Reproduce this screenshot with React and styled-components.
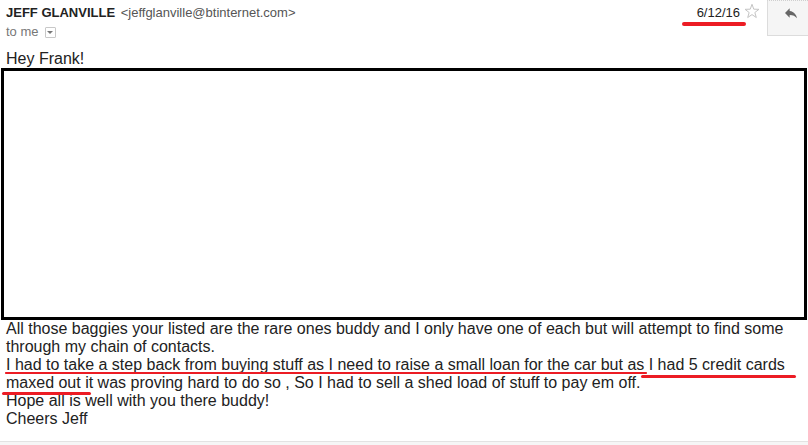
import React from "react";
import styled, { createGlobalStyle } from "styled-components";

const GlobalStyle = createGlobalStyle`
  html, body {
    margin: 0;
    padding: 0;
    background: #fff;
    overflow: hidden;
  }
  body {
    font-family: "Liberation Sans", Arial, sans-serif;
    color: #222;
  }
  * { box-sizing: border-box; }
`;

const Page = styled.div`
  width: 808px;
  height: 445px;
  display: flex;
  flex-direction: column;
  overflow: hidden;
`;

const Header = styled.header`
  display: flex;
  justify-content: space-between;
  align-items: flex-start;
  height: 50px;
  padding-left: 6px;
  font-size: 13px;
`;

const Sender = styled.div`
  display: flex;
  flex-direction: column;
`;

const NameLine = styled.div`
  padding-top: 5px;
  line-height: 15px;
  white-space: nowrap;
`;

const Name = styled.span`
  font-weight: bold;
  color: #222;
`;

const Email = styled.span`
  margin-left: 2px;
  color: #555;
`;

const Recipient = styled.div`
  display: flex;
  align-items: center;
  margin-top: 4px;
  line-height: 15px;
  color: #777;
`;

const DropToggle = styled.span`
  display: inline-flex;
  align-items: center;
  justify-content: center;
  width: 11px;
  height: 11px;
  margin-left: 6px;
  margin-top: 1px;
  border: 1px solid #c8c8c8;
  border-radius: 1px;
  background: #fff;

  &::after {
    content: "";
    border-left: 3px solid transparent;
    border-right: 3px solid transparent;
    border-top: 3px solid #777;
  }
`;

const Actions = styled.div`
  display: flex;
  align-items: flex-start;
`;

const DateStamp = styled.span`
  position: relative;
  padding-top: 5px;
  line-height: 15px;
  color: #222;
`;

const Highlight = styled.span`
  position: absolute;
  left: ${(p) => p.$left}px;
  top: ${(p) => p.$top}px;
  width: ${(p) => p.$width}px;
  height: ${(p) => p.$height}px;
  background: #ec1c24;
  border-radius: ${(p) => p.$height / 2}px;
`;

const StarWrap = styled.span`
  display: flex;
  margin: 3px 7px 0 4px;
`;

const ReplyButton = styled.div`
  display: flex;
  align-items: flex-start;
  width: 41px;
  height: 36px;
  padding: 4px 0 0 15px;
  background: #f5f5f5;
  border: 1px solid #dcdcdc;
  border-top: 1px dotted #cfcfcf;
  border-right: none;
`;

const Content = styled.main`
  padding-left: 6px;
  font-size: 16px;
  line-height: 18px;
  color: #222;
`;

const Greeting = styled.div``;

const Redaction = styled.div`
  width: 806px;
  height: 252px;
  margin-left: -5px;
  border: 3px solid #000;
  background: #fff;
`;

const Message = styled.div`
  position: relative;
`;

const Line = styled.div``;

const Footer = styled.div`
  margin-top: 13px;
  flex: 1;
  border-top: 1px solid #e3e3e3;
  background: #f6f6f6;
`;

function Star() {
  return (
    <svg width="16" height="16" viewBox="0 0 16 16">
      <polygon
        points="8,1.3 9.76,6.17 14.94,6.34 10.85,9.53 12.29,14.51 8,11.6 3.71,14.51 5.15,9.53 1.06,6.34 6.24,6.17"
        fill="none"
        stroke="#c4c4c4"
        strokeWidth="1"
        strokeLinejoin="round"
      />
    </svg>
  );
}

function ReplyArrow() {
  return (
    <svg width="16" height="16" viewBox="0 0 24 24">
      <path
        d="M10 9V5l-7 7 7 7v-4.1c5 0 8.5 1.6 11 5.1-1-5-4-10-11-11z"
        fill="#666"
      />
    </svg>
  );
}

export default function App() {
  return (
    <Page>
      <GlobalStyle />
      <Header>
        <Sender>
          <NameLine>
            <Name>JEFF GLANVILLE</Name>{" "}
            <Email>&lt;jeffglanville@btinternet.com&gt;</Email>
          </NameLine>
          <Recipient>
            to me
            <DropToggle />
          </Recipient>
        </Sender>
        <Actions>
          <DateStamp>
            6/12/16
            <Highlight $left={-15} $top={22} $width={64} $height={4} />
          </DateStamp>
          <StarWrap>
            <Star />
          </StarWrap>
          <ReplyButton>
            <ReplyArrow />
          </ReplyButton>
        </Actions>
      </Header>

      <Content>
        <Greeting>Hey Frank!</Greeting>
        <Redaction />
        <Message>
          <Line>
            All those baggies your listed are the rare ones buddy and I only have
            one of each but will attempt to find some through my chain of
            contacts.
          </Line>
          <Line>
            I had to take a step back from buying stuff as I need to raise a
            small loan for the car but as I had 5 credit cards maxed out it was
            proving hard to do so , So I had to sell a shed load of stuff to pay
            em off.
          </Line>
          <Line>Hope all is well with you there buddy!</Line>
          <Line>Cheers Jeff</Line>
          <Highlight $left={-1} $top={52} $width={642} $height={1.5} />
          <Highlight $left={635} $top={55} $width={155} $height={3} />
          <Highlight $left={-4} $top={71.5} $width={89} $height={3} />
        </Message>
      </Content>
      <Footer />
    </Page>
  );
}
